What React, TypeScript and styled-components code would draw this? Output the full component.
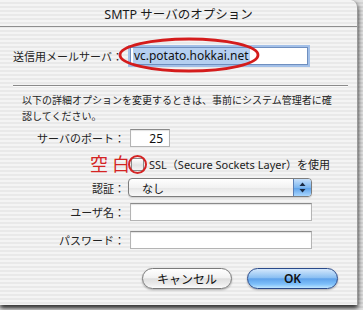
import React from 'react';
import styled, { createGlobalStyle } from 'styled-components';

const GlobalStyle = createGlobalStyle`
  html, body {
    margin: 0;
    padding: 0;
  }
  body {
    font-family: "Noto Sans", "Noto Sans CJK JP", sans-serif;
    color: #111;
  }
`;

const pinstripe = `repeating-linear-gradient(
  to bottom,
  #f4f4f4 0px,
  #f4f4f4 2px,
  #e9e9e9 2px,
  #e9e9e9 4px
)`;

const Screen = styled.div`
  width: 363px;
  height: 310px;
  overflow: hidden;
  background: repeating-linear-gradient(
    to bottom,
    #e2e2e2 0px,
    #e2e2e2 2px,
    #d4d4d4 2px,
    #d4d4d4 4px
  );
`;

const Window = styled.div`
  position: relative;
  width: 357px;
  height: 305px;
  background: ${pinstripe};
  border-right: 1px solid #9a9a9a;
  border-radius: 0 7px 0 0;
  box-shadow: 0 3px 5px rgba(0, 0, 0, 0.85);
  display: flex;
  flex-direction: column;
`;

const TitleBar = styled.div`
  height: 26px;
  border-bottom: 1px solid #8e8e8e;
  display: flex;
  align-items: center;
  justify-content: center;
  font-size: 12.5px;
  color: #1a1a1a;
`;

const Content = styled.div`
  padding: 0 9px 0 13px;
  display: flex;
  flex-direction: column;
`;

const ServerRow = styled.div`
  margin-top: 18px;
  height: 21px;
  display: flex;
  align-items: center;
`;

const Label = styled.span`
  font-size: 11px;
  white-space: nowrap;
  color: #222;
`;

const FocusField = styled.div`
  margin-left: 7px;
  width: 172px;
  height: 16px;
  padding: 0 2px;
  background: #fff;
  border: 1px solid #6f8fbf;
  box-shadow: 0 0 0 2px #a3c0e8;
  display: flex;
  align-items: center;
  font-size: 12px;
`;

const Selected = styled.span`
  background: #b5cff0;
  line-height: 16px;
  padding: 0 1px;
`;

const Separator = styled.div`
  margin-top: 19px;
  height: 1px;
  width: 335px;
  background: #8a8a8a;
  box-shadow: 0 1px 0 #fafafa;
`;

const Note = styled.p`
  margin: 6px 0 0 9px;
  font-size: 10px;
  line-height: 16px;
  color: #222;
  font-family: "Noto Sans CJK JP", sans-serif;
`;

const Form = styled.div`
  display: flex;
  flex-direction: column;
`;

const FormRow = styled.div<{ $mt: number; $h: number }>`
  margin-top: ${({ $mt }) => $mt}px;
  height: ${({ $h }) => $h}px;
  display: grid;
  grid-template-columns: 117px 1fr;
  align-items: center;
`;

const RowLabel = styled(Label)<{ $pad?: number }>`
  text-align: right;
  padding-right: ${({ $pad }) => ($pad ?? 5)}px;
`;

const Field = styled.div<{ $w: number; $align?: string }>`
  box-sizing: border-box;
  width: ${({ $w }) => $w}px;
  height: 18px;
  background: #fff;
  border: 1px solid #b4b4b4;
  border-top-color: #8a8a8a;
  box-shadow: inset 0 1px 1px rgba(0, 0, 0, 0.12);
  display: flex;
  align-items: center;
  justify-content: ${({ $align }) => $align ?? 'flex-start'};
  padding: 0 6px;
  font-size: 12px;
`;

const Annotation = styled.span`
  font-size: 18px;
  line-height: 18px;
  color: #d42424;
  font-family: "Noto Sans CJK JP", sans-serif;
`;

const CheckWrap = styled.div`
  display: flex;
  align-items: center;
`;

const Ring = styled.span`
  position: relative;
  width: 13px;
  height: 13px;
  margin-left: 1px;
  &::after {
    content: '';
    position: absolute;
    left: -3px;
    top: -3px;
    width: 15px;
    height: 15px;
    border: 2px solid #d42424;
    border-radius: 50%;
  }
`;

const Checkbox = styled.span`
  display: block;
  box-sizing: border-box;
  width: 13px;
  height: 13px;
  border: 1px solid #8a8a8a;
  border-radius: 2px;
  background: linear-gradient(#ffffff, #e4e4e4 55%, #f4f4f4);
`;

const CheckText = styled.span`
  margin-left: 5px;
  font-size: 11px;
  color: #222;
  white-space: nowrap;
`;

const Popup = styled.div`
  box-sizing: border-box;
  width: 184px;
  height: 19px;
  margin-left: -2px;
  border: 1px solid #7d7d7d;
  border-radius: 4px;
  background: linear-gradient(#ffffff, #f2f2f2 50%, #e6e6e6 51%, #f8f8f8);
  box-shadow: 0 1px 1px rgba(0, 0, 0, 0.15);
  display: flex;
  align-items: center;
  overflow: hidden;
  font-size: 11px;
`;

const PopupText = styled.span`
  flex: 1;
  padding-left: 13px;
  font-family: "Noto Sans CJK JP", sans-serif;
`;

const PopupArrows = styled.span`
  width: 17px;
  height: 100%;
  background: linear-gradient(#c6e0fb, #7db7f0 50%, #5a9fe8 51%, #a8d6ff);
  border-left: 1px solid #5b7fb5;
  display: flex;
  align-items: center;
  justify-content: center;
`;

const ButtonRow = styled.div`
  margin-top: 19px;
  display: flex;
  justify-content: flex-end;
  gap: 15px;
  padding-right: 10px;
`;

const AquaButton = styled.button<{ $primary?: boolean }>`
  box-sizing: border-box;
  width: ${({ $primary }) => ($primary ? 91 : 90)}px;
  height: 21px;
  border-radius: 11px;
  border: 1px solid ${({ $primary }) => ($primary ? '#2a4a8a' : '#7a7a7a')};
  background: ${({ $primary }) =>
    $primary
      ? 'linear-gradient(#d4e8fc 0%, #8cc0f2 45%, #5fa2ea 52%, #7ec0fa 80%, #bfe6ff 100%)'
      : 'linear-gradient(#ffffff 0%, #f2f2f2 45%, #dedede 52%, #ececec 80%, #fbfbfb 100%)'};
  box-shadow: 0 1px 2px rgba(0, 0, 0, 0.3);
  font-family: "Noto Sans", "Noto Sans CJK JP", sans-serif;
  font-size: 12px;
  font-weight: ${({ $primary }) => ($primary ? 600 : 400)};
  color: #111;
  padding: 0;
  cursor: pointer;
  display: flex;
  align-items: center;
  justify-content: center;
`;

const Ellipse = styled.svg`
  position: absolute;
  left: 117px;
  top: 36px;
  pointer-events: none;
`;

const App: React.FC = () => {
  return (
    <Screen>
      <GlobalStyle />
      <Window>
        <TitleBar>SMTP サーバのオプション</TitleBar>
        <Content>
          <ServerRow>
            <Label>送信用メールサーバ：</Label>
            <FocusField>
              <Selected>vc.potato.hokkai.net</Selected>
            </FocusField>
          </ServerRow>
          <Separator />
          <Note>
            以下の詳細オプションを変更するときは、事前にシステム管理者に確
            <br />
            認してください。
          </Note>
          <Form>
            <FormRow $mt={5} $h={18}>
              <RowLabel>サーバのポート：</RowLabel>
              <Field $w={40} $align="flex-end">25</Field>
            </FormRow>
            <FormRow $mt={7} $h={20}>
              <RowLabel $pad={0}>
                <Annotation>空 白</Annotation>
              </RowLabel>
              <CheckWrap>
                <Ring>
                  <Checkbox />
                </Ring>
                <CheckText>SSL（Secure Sockets Layer）を使用</CheckText>
              </CheckWrap>
            </FormRow>
            <FormRow $mt={4} $h={19}>
              <RowLabel>認証：</RowLabel>
              <Popup>
                <PopupText>なし</PopupText>
                <PopupArrows>
                  <svg width="7" height="11" viewBox="0 0 7 11">
                    <path d="M3.5 0.5 L6.5 4 L0.5 4 Z" fill="#1a2a44" />
                    <path d="M3.5 10.5 L6.5 7 L0.5 7 Z" fill="#1a2a44" />
                  </svg>
                </PopupArrows>
              </Popup>
            </FormRow>
            <FormRow $mt={6} $h={18}>
              <RowLabel>ユーザ名：</RowLabel>
              <Field $w={182} />
            </FormRow>
            <FormRow $mt={10} $h={18}>
              <RowLabel>パスワード：</RowLabel>
              <Field $w={182} />
            </FormRow>
          </Form>
          <ButtonRow>
            <AquaButton>キャンセル</AquaButton>
            <AquaButton $primary>OK</AquaButton>
          </ButtonRow>
        </Content>
        <Ellipse width="144" height="38" viewBox="0 0 144 38">
          <ellipse cx="72" cy="19" rx="69" ry="16" fill="none" stroke="#d41c1c" strokeWidth="2.8" />
        </Ellipse>
      </Window>
    </Screen>
  );
};

export default App;
